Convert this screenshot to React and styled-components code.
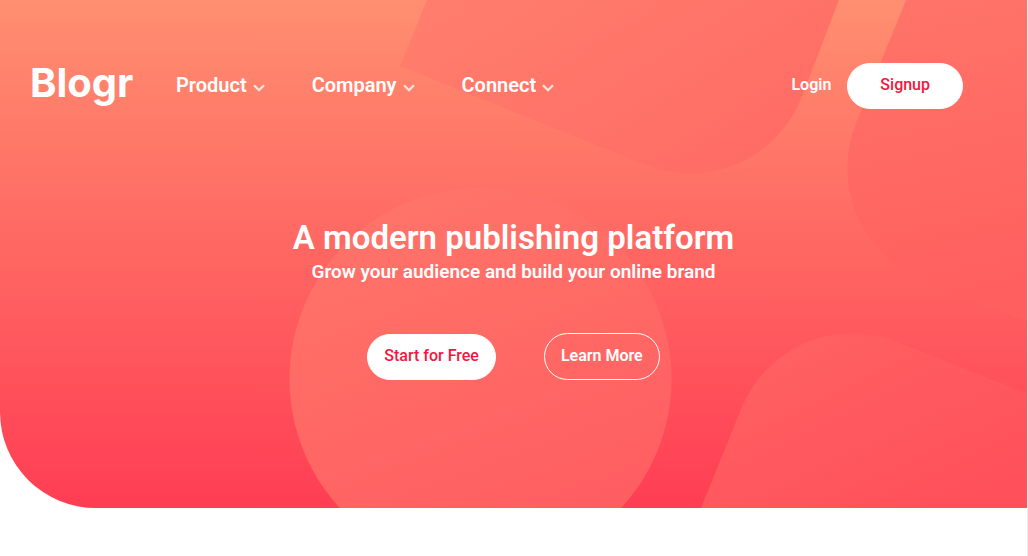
import React from "react";
import styled, { createGlobalStyle } from "styled-components";

const GlobalStyle = createGlobalStyle`
  * { box-sizing: border-box; }
  body {
    margin: 0;
    background: #fff;
    font-family: Roboto, "Liberation Sans", sans-serif;
  }
`;

const Page = styled.div`
  min-height: 100vh;
  border-right: 1px solid #ececec;
`;

const Hero = styled.header`
  position: relative;
  overflow: hidden;
  padding: 63px 64px 128px 30px;
  border-bottom-left-radius: 96px;
  background: linear-gradient(180deg, #ff8f70, #ff3d54);
  color: #fff;
`;

const Pattern = styled.svg`
  position: absolute;
  inset: 0;
  width: 100%;
  height: 100%;
`;

const NavBar = styled.nav`
  position: relative;
  display: flex;
  align-items: center;
  height: 46px;
`;

const Logo = styled.a`
  width: 146px;
  padding-bottom: 6px;
  color: #fff;
  font: 700 40px/40px Inter, sans-serif;
  text-decoration: none;
`;

const Menu = styled.ul`
  display: flex;
  gap: 47px;
  margin: 0;
  padding: 0 0 2px;
  list-style: none;
`;

const MenuButton = styled.button`
  display: flex;
  align-items: center;
  gap: 6px;
  padding: 0;
  border: 0;
  background: none;
  color: #fff;
  font: 600 20px/24px Roboto, sans-serif;
  cursor: pointer;
`;

const Chevron = styled.svg`
  width: 12px;
  height: 8px;
  margin-top: 5px;
`;

const Account = styled.div`
  display: flex;
  align-items: center;
  gap: 16px;
  margin-left: auto;
`;

const LoginLink = styled.a`
  padding-bottom: 2px;
  color: #fff;
  font-size: 16px;
  font-weight: 600;
  line-height: 20px;
  text-decoration: none;
`;

const Pill = styled.button`
  height: ${(p) => (p.$outline ? 47 : 46)}px;
  padding: 0 ${(p) => (p.$wide ? 32 : 16)}px 2px;
  border: 1px solid #fff;
  border-radius: 24px;
  background: ${(p) => (p.$outline ? "transparent" : "#fff")};
  color: ${(p) => (p.$outline ? "#fff" : "#f5153f")};
  font: ${(p) => (p.$outline ? 600 : 500)} 16px/20px Roboto, sans-serif;
  cursor: pointer;
`;

const Intro = styled.section`
  position: relative;
  display: flex;
  flex-direction: column;
  align-items: center;
  padding: 109px 0 0 34px;
  text-align: center;
`;

const Title = styled.h1`
  margin: 0;
  font-size: 33px;
  font-weight: 600;
  line-height: 40px;
`;

const Subtitle = styled.p`
  margin: 0;
  padding-top: 2px;
  font-size: 19px;
  font-weight: 600;
  line-height: 24px;
`;

const Actions = styled.div`
  display: flex;
  align-items: center;
  gap: 48px;
  margin-top: 49px;
`;

const menus = ["Product", "Company", "Connect"];

export default function App() {
  return (
    <Page>
      <GlobalStyle />
      <Hero>
        <Pattern viewBox="0 0 1027 508" preserveAspectRatio="xMidYMin slice" aria-hidden="true">
          <defs>
            <linearGradient id="top" gradientUnits="userSpaceOnUse" x1="470" y1="0" x2="620" y2="240">
              <stop offset="0" stopColor="#ff7d6c" />
              <stop offset="1" stopColor="#ff6c65" />
            </linearGradient>
            <linearGradient id="side" gradientUnits="userSpaceOnUse" x1="900" y1="0" x2="960" y2="300">
              <stop offset="0" stopColor="#ff7468" />
              <stop offset="1" stopColor="#ff5f5f" />
            </linearGradient>
            <linearGradient id="disc" gradientUnits="userSpaceOnUse" x1="420" y1="188" x2="560" y2="570">
              <stop offset="0" stopColor="#ff7469" />
              <stop offset="1" stopColor="#ff5b60" />
            </linearGradient>
            <linearGradient id="low" gradientUnits="userSpaceOnUse" x1="810" y1="332" x2="900" y2="530">
              <stop offset="0" stopColor="#ff6161" />
              <stop offset="1" stopColor="#ff505b" />
            </linearGradient>
          </defs>
          <path fill="url(#top)" d="M427 0 400 66 645 165A120 120 0 0 0 801 99L839 0Z" />
          <path fill="url(#side)" d="M906 0 856 123A120 120 0 0 0 922 279L1028 322V0Z" />
          <circle fill="url(#disc)" cx="480.5" cy="379" r="191" />
          <path fill="url(#low)" d="M701 508 742 407A120 120 0 0 1 895 341L1028 394V508Z" />
        </Pattern>
        <NavBar>
          <Logo href="#">Blogr</Logo>
          <Menu>
            {menus.map((name) => (
              <li key={name}>
                <MenuButton type="button">
                  {name}
                  <Chevron viewBox="0 0 12 8" aria-hidden="true">
                    <path d="M1 1.2 6 6.2 11 1.2" fill="none" stroke="#ffe4dd" strokeWidth="2.3" />
                  </Chevron>
                </MenuButton>
              </li>
            ))}
          </Menu>
          <Account>
            <LoginLink href="#">Login</LoginLink>
            <Pill type="button" $wide>Signup</Pill>
          </Account>
        </NavBar>
        <Intro>
          <Title>A modern publishing platform</Title>
          <Subtitle>Grow your audience and build your online brand</Subtitle>
          <Actions>
            <Pill type="button">Start for Free</Pill>
            <Pill type="button" $outline>Learn More</Pill>
          </Actions>
        </Intro>
      </Hero>
    </Page>
  );
}
